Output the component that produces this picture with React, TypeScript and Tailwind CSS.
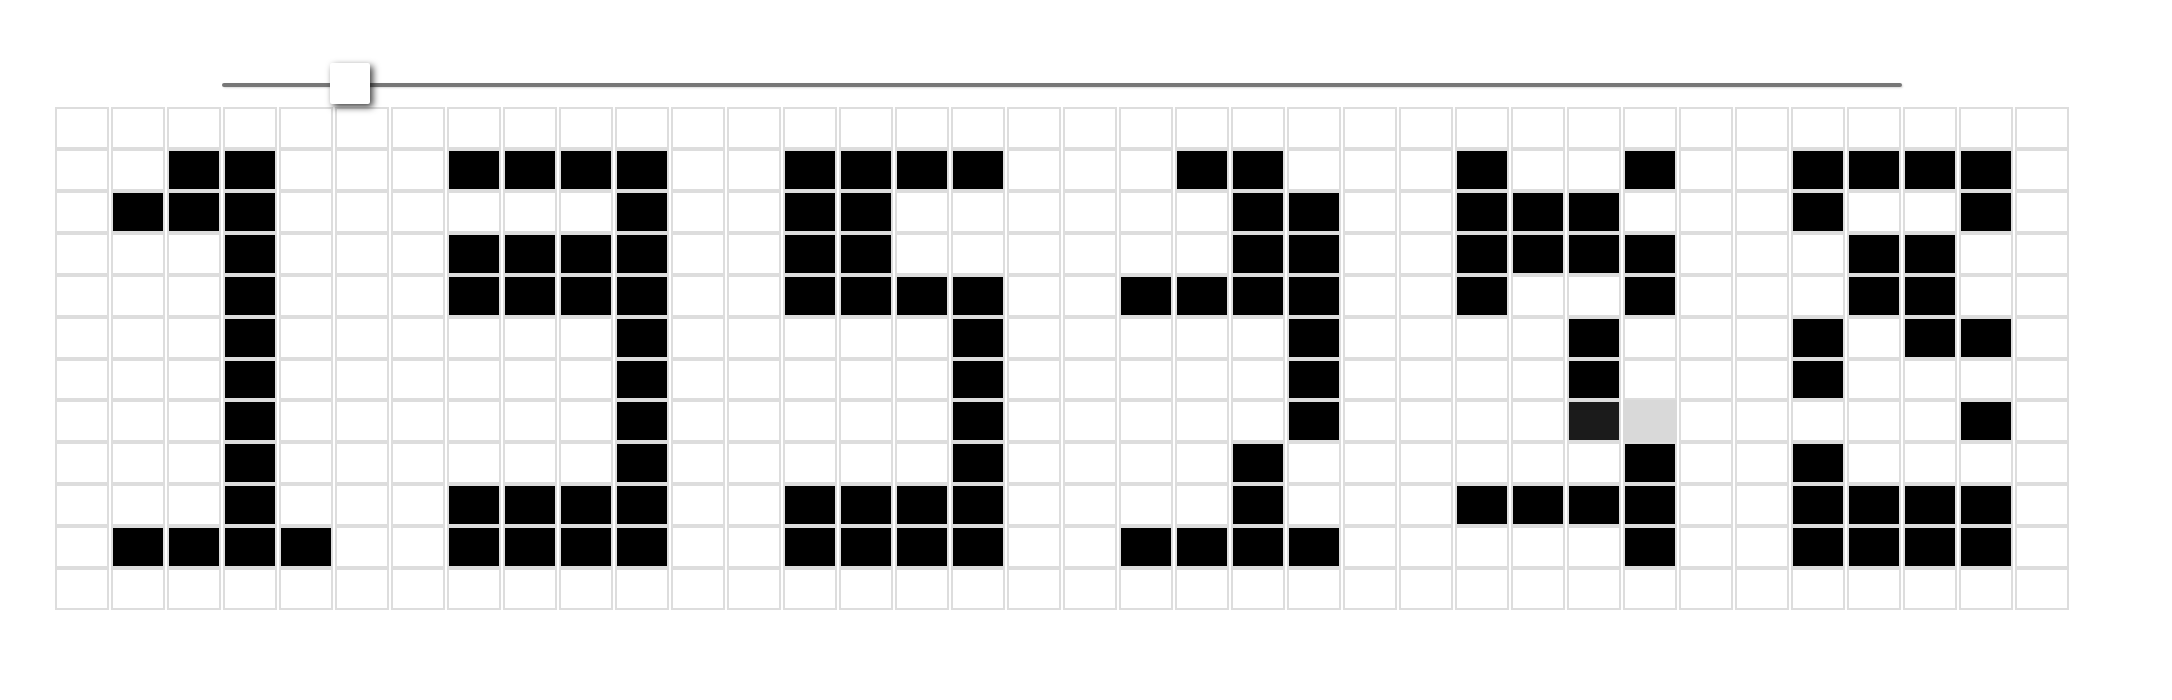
const ROWS = [
  '....................................',
  '..##...####..####...##...#..#..####.',
  '.###......#..##......##..###...#..#.',
  '...#...####..##......##..####...##..',
  '...#...####..####..####..#..#...##..',
  '...#......#.....#.....#....#...#.##.',
  '...#......#.....#.....#....#...#....',
  '...#......#.....#.....#....dg.....#.',
  '...#......#.....#....#......#..#....',
  '...#...####..####....#...####..####.',
  '.####..####..####..####.....#..####.',
  '....................................',
];

function cellClass(c: string) {
  if (c === '#') return 'bg-black border-[#dddddd]';
  if (c === 'd') return 'bg-[#1b1b1b] border-[#dddddd]';
  if (c === 'g') return 'bg-[#d9d9d9] border-[#d9d9d9]';
  return 'bg-white border-[#dddddd]';
}

function Slider() {
  return (
    <div className="flex h-[41px] items-start pl-[222px]">
      <div className="relative mt-[20px] h-[4px] w-[1680px] rounded-full bg-[#777777] shadow-[1px_1px_2px_rgba(0,0,0,0.15)]">
        <div className="absolute left-[108px] top-[-20px] h-[41px] w-[40px] rounded-[2px] bg-white shadow-[3px_3px_7px_rgba(0,0,0,0.75)]" />
      </div>
    </div>
  );
}

export default function App() {
  return (
    <div className="h-[700px] w-[2172px] bg-white pt-[63px]">
      <Slider />
      <div className="ml-[54px] mt-[3px] grid h-[503px] w-[2016px] grid-cols-[repeat(36,56px)] grid-rows-12">
        {ROWS.map((row, r) =>
          row.split('').map((c, i) => (
            <div key={`${r}-${i}`} className={`mx-px border-2 ${cellClass(c)}`} />
          ))
        )}
      </div>
    </div>
  );
}
